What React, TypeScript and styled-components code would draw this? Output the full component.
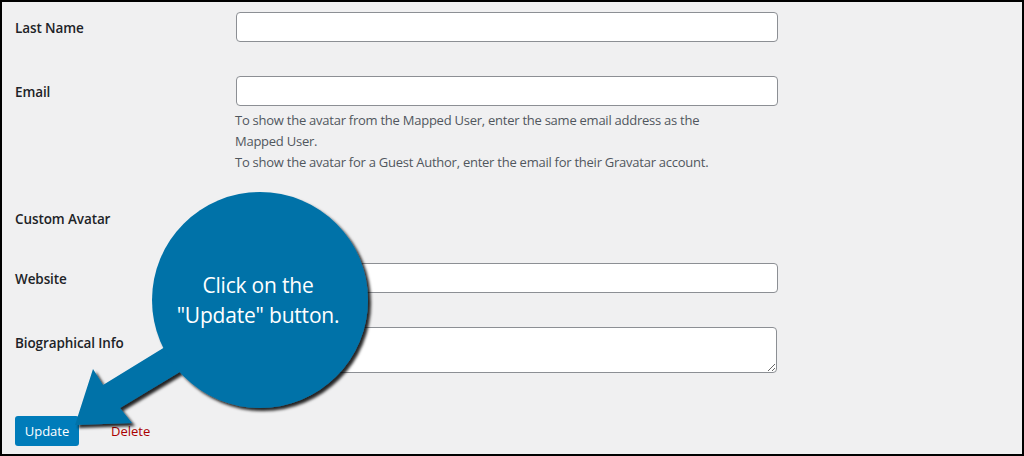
import React from "react";
import styled, { createGlobalStyle } from "styled-components";

const GlobalStyle = createGlobalStyle`
  html, body { margin: 0; padding: 0; background: #000; }
  body { font-family: "Open Sans", "Noto Sans", sans-serif; }
  * { box-sizing: border-box; }
`;

const Frame = styled.div`
  position: relative;
  width: 1024px;
  height: 456px;
  border: 2px solid #000;
  background: #f0f0f1;
  overflow: hidden;
  padding: 10px 0 0 13px;
  display: flex;
  flex-direction: column;
`;

const FormRow = styled.div<{ $gap: number; $min?: number }>`
  display: grid;
  grid-template-columns: 221px 542px;
  margin-bottom: ${(p) => p.$gap}px;
  min-height: ${(p) => p.$min ?? 0}px;
`;

const Label = styled.label`
  font-size: 13.5px;
  font-weight: 600;
  line-height: 21px;
  padding-top: 6px;
  color: #1d2327;
  letter-spacing: -0.1px;
`;

const Field = styled.div`
  display: flex;
  flex-direction: column;
`;

const TextInput = styled.input`
  display: block;
  width: 542px;
  height: 30px;
  margin: 0;
  border: 1px solid #8c8f94;
  border-radius: 4px;
  background: #fff;
  font: 14px "Open Sans", sans-serif;
`;

const TextArea = styled.textarea`
  display: block;
  width: 541px;
  height: 46px;
  margin: 0;
  border: 1px solid #8c8f94;
  border-radius: 4px;
  background: #fff;
  font: 14px "Open Sans", sans-serif;
`;

const Description = styled.p`
  margin: 4px 0 0 -1px;
  font-size: 13px;
  letter-spacing: -0.25px;
  line-height: 21px;
  color: #50575e;
  white-space: nowrap;
`;

const Actions = styled.div`
  display: flex;
  align-items: center;
  gap: 32px;
`;

const PrimaryButton = styled.button`
  width: 64px;
  height: 30px;
  border: none;
  border-radius: 3px;
  background: #007cba;
  color: #fff;
  font: 13px "Open Sans", sans-serif;
  padding: 0;
`;

const DeleteLink = styled.a`
  font-size: 13px;
  color: #a00;
  text-decoration: none;
`;

const Callout = styled.div`
  position: absolute;
  left: 58px;
  top: 178px;
  width: 320px;
  height: 270px;
  pointer-events: none;
`;

const CalloutArt = styled.svg`
  position: absolute;
  inset: 0;
`;

const BubbleText = styled.div`
  position: absolute;
  left: 92px;
  top: 12px;
  width: 212px;
  height: 216px;
  display: flex;
  align-items: center;
  justify-content: center;
  text-align: center;
  color: #fff;
  font-family: "Open Sans", "Noto Sans", sans-serif;
  font-size: 21px;
  letter-spacing: -0.2px;
  line-height: 30px;
  white-space: nowrap;
`;

export default function App() {
  return (
    <>
      <GlobalStyle />
      <Frame>
        <FormRow $gap={34}>
          <Label>Last Name</Label>
          <Field>
            <TextInput type="text" />
          </Field>
        </FormRow>
        <FormRow $gap={30}>
          <Label>Email</Label>
          <Field>
            <TextInput type="text" />
            <Description>
              To show the avatar from the Mapped User, enter the same email address as the
              <br />
              Mapped User.
              <br />
              To show the avatar for a Guest Author, enter the email for their Gravatar account.
            </Description>
          </Field>
        </FormRow>
        <FormRow $gap={30} $min={30}>
          <Label>Custom Avatar</Label>
          <Field />
        </FormRow>
        <FormRow $gap={34}>
          <Label>Website</Label>
          <Field>
            <TextInput type="text" />
          </Field>
        </FormRow>
        <FormRow $gap={43}>
          <Label>Biographical Info</Label>
          <Field>
            <TextArea />
          </Field>
        </FormRow>
        <Actions>
          <PrimaryButton>Update</PrimaryButton>
          <DeleteLink href="#">Delete</DeleteLink>
        </Actions>
        <Callout>
          <CalloutArt width="320" height="270" viewBox="60 180 320 270">
            <defs>
              <filter id="shadow" x="-20%" y="-20%" width="140%" height="140%">
                <feDropShadow dx="3" dy="3" stdDeviation="1.6" floodColor="#000" floodOpacity="0.85" />
              </filter>
            </defs>
            <g filter="url(#shadow)" fill="#0272a8">
              <polygon points="75,425 93,369 103,385 178,339 193,364 120,408 132,423" />
              <circle cx="260" cy="300" r="108" />
            </g>
          </CalloutArt>
          <BubbleText>
            Click on the
            <br />
            "Update" button.
          </BubbleText>
        </Callout>
      </Frame>
    </>
  );
}
